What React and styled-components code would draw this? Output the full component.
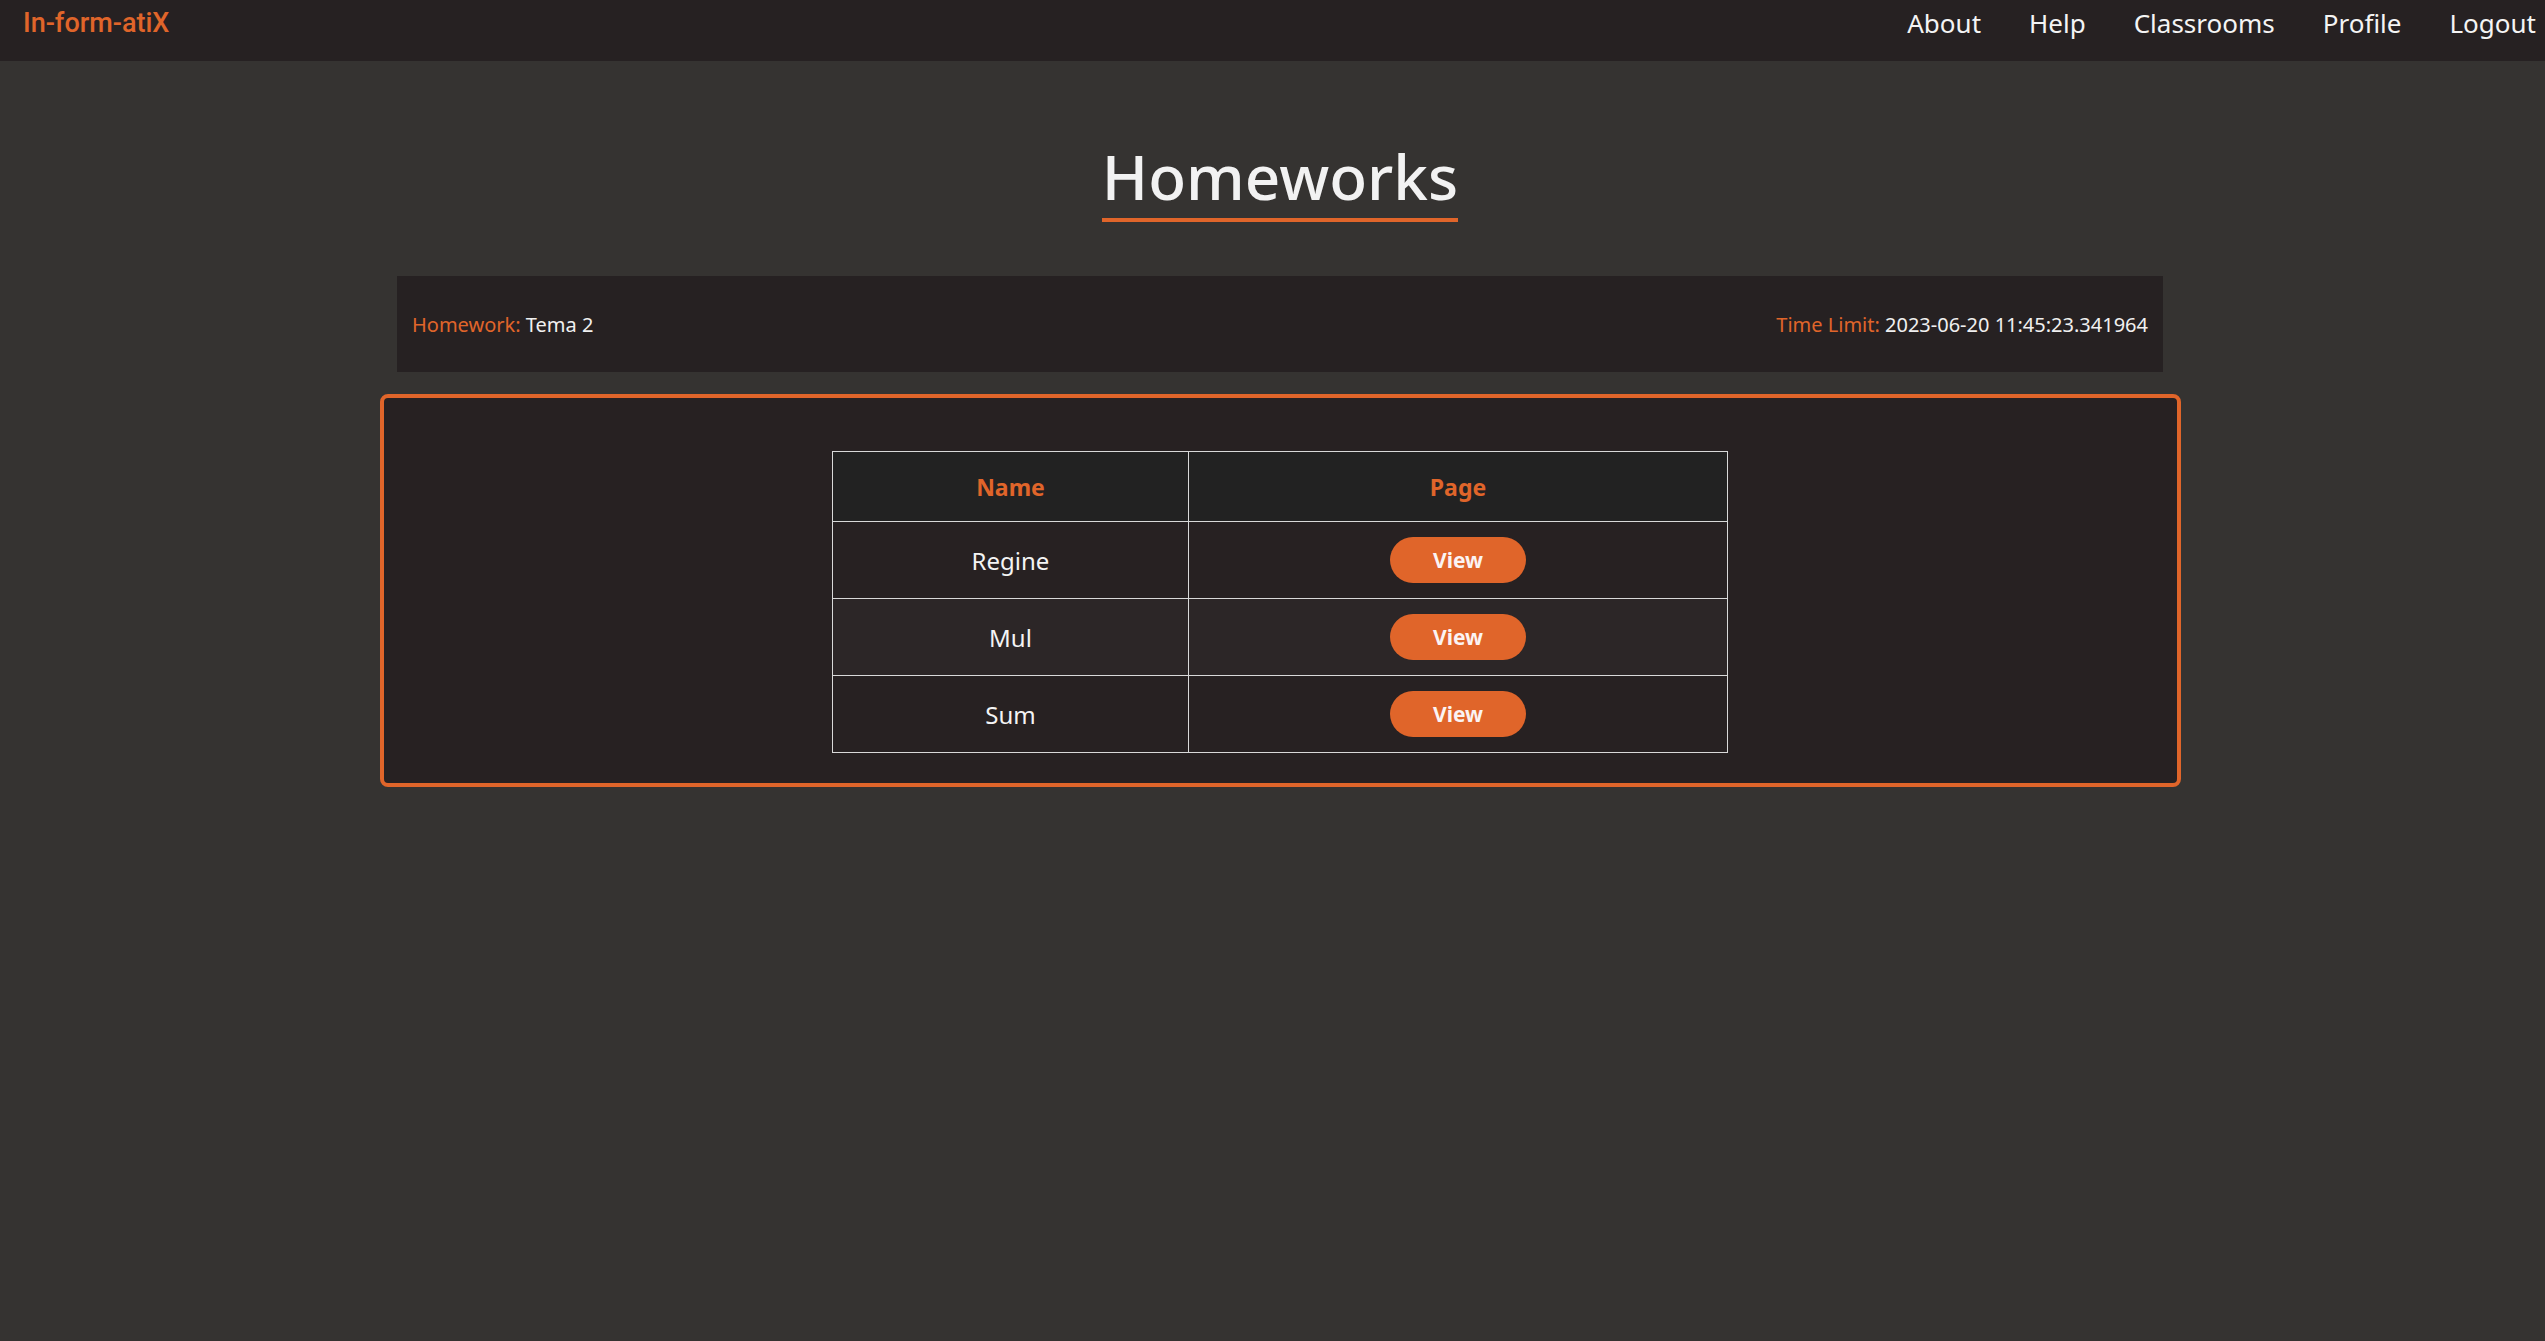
import React from "react";
import styled, { createGlobalStyle } from "styled-components";

const GlobalStyle = createGlobalStyle`
  html, body {
    margin: 0;
    padding: 0;
    background: #353331;
    font-family: "Noto Sans", "Open Sans", sans-serif;
    color: #f2f2f2;
  }
  #root {
    min-height: 100vh;
    background: #353331;
  }
`;

const homeworks = [
  { id: 1, name: "Regine" },
  { id: 2, name: "Mul" },
  { id: 3, name: "Sum" },
];

const App = () => {
  return (
    <>
      <GlobalStyle />
      <NavBar>
        <Logo>In-form-atiX</Logo>
        <NavLinks>
          <NavLink>About</NavLink>
          <NavLink>Help</NavLink>
          <NavLink>Classrooms</NavLink>
          <NavLink>Profile</NavLink>
          <NavLink>Logout</NavLink>
        </NavLinks>
      </NavBar>

      <Main>
        <TitleWrap>
          <Title>Homeworks</Title>
        </TitleWrap>

        <InfoBar>
          <InfoItem>
            <Label>Homework:</Label> Tema 2
          </InfoItem>
          <InfoItem>
            <Label>Time Limit:</Label> 2023-06-20 11:45:23.341964
          </InfoItem>
        </InfoBar>

        <Card>
          <Table>
            <thead>
              <tr>
                <th>Name</th>
                <th>Page</th>
              </tr>
            </thead>
            <tbody>
              {homeworks.map((hw) => (
                <tr key={hw.id}>
                  <td>{hw.name}</td>
                  <td>
                    <ViewButton>View</ViewButton>
                  </td>
                </tr>
              ))}
            </tbody>
          </Table>
        </Card>
      </Main>
    </>
  );
};

const NavBar = styled.nav`
  height: 61px;
  background: #262122;
  display: flex;
  justify-content: space-between;
  align-items: flex-start;
  padding: 5px 9px 0 23px;
  box-sizing: border-box;
`;

const Logo = styled.a`
  font-family: Roboto, "Liberation Sans", sans-serif;
  font-weight: 500;
  font-size: 27px;
  line-height: 36px;
  color: #e0652a;
  cursor: pointer;
`;

const NavLinks = styled.div`
  display: flex;
  gap: 48px;
`;

const NavLink = styled.a`
  font-size: 26px;
  line-height: 36px;
  color: #f4f4f4;
  cursor: pointer;
`;

const Main = styled.main`
  padding-left: 15px;
`;

const TitleWrap = styled.div`
  text-align: center;
  padding-top: 73px;
`;

const Title = styled.h1`
  display: inline-block;
  margin: 0;
  font-size: 62px;
  font-weight: 500;
  line-height: 84px;
  color: #f2f2f2;
  border-bottom: 4px solid #e0652a;
`;

const InfoBar = styled.div`
  width: 1766px;
  height: 96px;
  margin: 54px auto 0;
  background: #262122;
  display: flex;
  justify-content: space-between;
  align-items: center;
  padding: 0 15px;
  box-sizing: border-box;
  font-size: 20px;
`;

const InfoItem = styled.div`
  color: #f0f0f0;
`;

const Label = styled.span`
  color: #e0652a;
`;

const Card = styled.section`
  width: 1801px;
  margin: 22px auto 0;
  box-sizing: border-box;
  border: 4px solid #e0652a;
  border-radius: 8px;
  background: #272122;
  padding: 53px 0 30px;
  display: flex;
  justify-content: center;
`;

const Table = styled.table`
  width: 896px;
  border-collapse: collapse;
  text-align: center;

  th, td {
    border: 1px solid #d9d9d9;
    padding: 0;
  }
  th {
    height: 69px;
    background: #222222;
    color: #e0652a;
    font-size: 23px;
    font-weight: 700;
  }
  th:first-child {
    width: 355px;
  }
  td {
    height: 76px;
    font-size: 24px;
    color: #f4f4f4;
  }
  tbody tr:nth-child(odd) {
    background: #272122;
  }
  tbody tr:nth-child(even) {
    background: #2c2627;
  }
`;

const ViewButton = styled.button`
  width: 136px;
  height: 46px;
  border: none;
  border-radius: 23px;
  background: #e0652a;
  color: #fbf3f3;
  font-family: "Noto Sans", sans-serif;
  font-weight: 700;
  font-size: 21px;
  cursor: pointer;
  vertical-align: middle;
`;

export default App;
